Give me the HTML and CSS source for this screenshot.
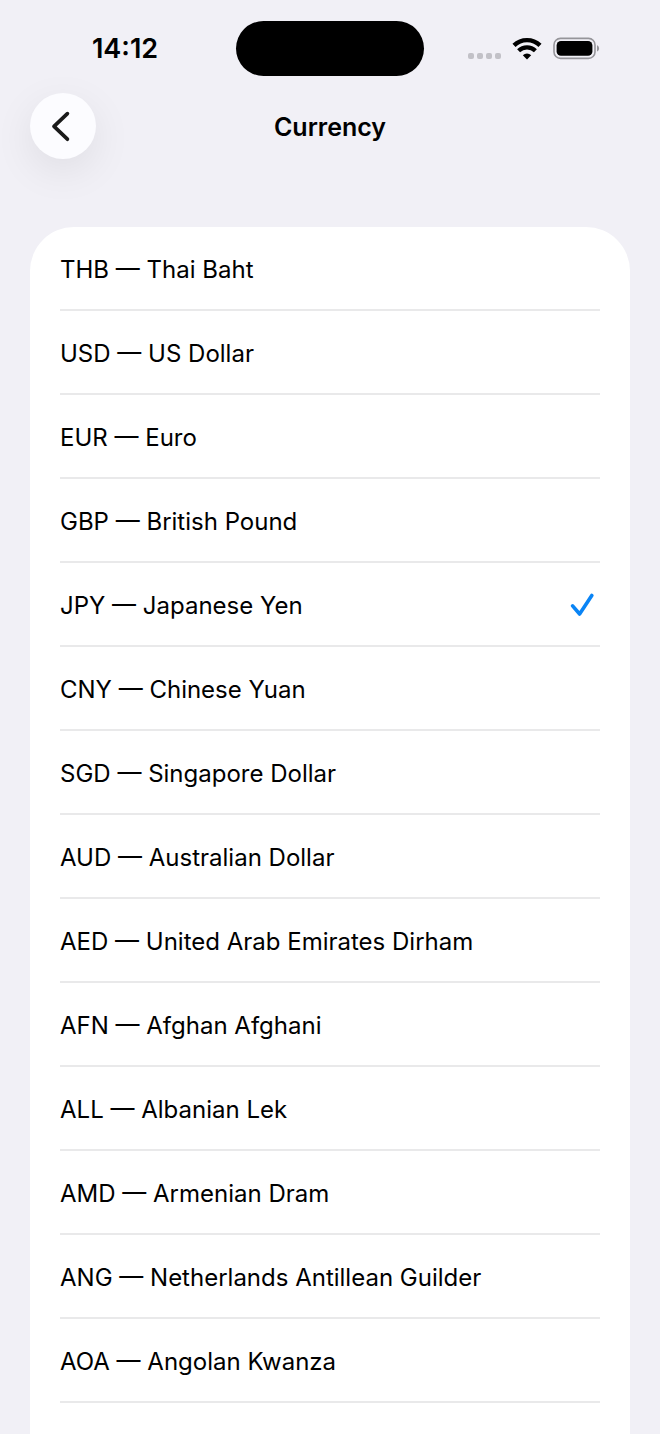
FILE: index.html
```
<!DOCTYPE html>
<html lang="en">
<head>
    <meta charset="UTF-8">
    <meta name="viewport" content="width=device-width, initial-scale=1.0">
    <title>Currency</title>
    <link rel="stylesheet" href="styles.css">
</head>
<body>
    <div class="status-bar">
        <time class="clock">14:12</time>
        <div class="island"></div>
        <div class="status-icons">
            <svg class="signal" width="34" height="28" viewBox="0 0 34 28" fill="#c2c1c7" aria-hidden="true">
                <rect x="1" y="18" width="6" height="6" rx="2"/>
                <rect x="10" y="18" width="6" height="6" rx="2"/>
                <rect x="19" y="18" width="6" height="6" rx="2"/>
                <rect x="28" y="18" width="6" height="6" rx="2"/>
            </svg>
            <svg width="30" height="28" viewBox="0 0 30 28" aria-hidden="true">
                <path d="M2 10.4A18.6 18.6 0 0 1 28 10.4" fill="none" stroke="#000" stroke-width="4.4"/>
                <path d="M6.6 15.8A12 12 0 0 1 23.4 15.8" fill="none" stroke="#000" stroke-width="4.2"/>
                <path d="M15 24.4L10.8 20.2A6 6 0 0 1 19.2 20.2Z"/>
            </svg>
            <svg width="47" height="28" viewBox="0 0 47 28" aria-hidden="true">
                <rect x="1" y="3.4" width="41" height="20" rx="6.5" fill="none" stroke="#96959a" stroke-width="1.6"/>
                <rect x="3.6" y="6" width="35.8" height="14.8" rx="4.4"/>
                <path d="M44 10.2C46.8 11.4 46.8 15.4 44 16.6Z" fill="#96959a"/>
            </svg>
        </div>
    </div>

    <header>
        <button class="back" type="button" aria-label="Back">
            <svg width="34" height="34" viewBox="0 0 34 34" aria-hidden="true">
                <path d="M21.4 4.6L8 17.4L21.4 30.2" fill="none" stroke="#1a1a1a" stroke-width="3.7" stroke-linecap="round" stroke-linejoin="round"/>
            </svg>
        </button>
        <h1>Currency</h1>
    </header>

    <main>
        <ul class="currency-list">
            <li><button type="button">THB — Thai Baht</button></li>
            <li><button type="button">USD — US Dollar</button></li>
            <li><button type="button">EUR — Euro</button></li>
            <li><button type="button">GBP — British Pound</button></li>
            <li>
                <button type="button" aria-pressed="true">JPY — Japanese Yen
                    <svg class="check" width="24" height="24" viewBox="0 0 24 24" aria-hidden="true">
                        <path d="M2.6 12.8L9.6 21L21.8 2.4" fill="none" stroke="#0a84f5" stroke-width="3.6" stroke-linecap="round" stroke-linejoin="round"/>
                    </svg>
                </button>
            </li>
            <li><button type="button">CNY — Chinese Yuan</button></li>
            <li><button type="button">SGD — Singapore Dollar</button></li>
            <li><button type="button">AUD — Australian Dollar</button></li>
            <li><button type="button">AED — United Arab Emirates Dirham</button></li>
            <li><button type="button">AFN — Afghan Afghani</button></li>
            <li><button type="button">ALL — Albanian Lek</button></li>
            <li><button type="button">AMD — Armenian Dram</button></li>
            <li><button type="button">ANG — Netherlands Antillean Guilder</button></li>
            <li><button type="button">AOA — Angolan Kwanza</button></li>
        </ul>
    </main>
</body>
</html>
```
FILE: styles.css
```
* {
    box-sizing: border-box;
}
body {
    margin: 0;
    min-height: 100vh;
    display: flex;
    flex-direction: column;
    background-color: #f1f0f6;
    color: #000;
    font-family: Inter, "Liberation Sans", sans-serif;
}

/* status bar */
.status-bar {
    display: grid;
    grid-template-columns: 1fr 188px 1fr;
    align-items: center;
    padding-top: 21px;
}
.clock {
    padding-left: 14px;
    text-align: center;
    font-size: 27px;
    font-weight: 600;
}
.island {
    height: 55px;
    border-radius: 28px;
    background-color: #000;
}
.status-icons {
    display: flex;
    justify-content: flex-end;
    gap: 11px;
    padding-right: 60px;
}

/* title bar */
header {
    display: grid;
    grid-template-columns: 66px 1fr 66px;
    align-items: center;
    padding: 17px 30px 0;
}
.back {
    display: flex;
    align-items: center;
    justify-content: center;
    width: 66px;
    height: 66px;
    padding: 0;
    border: none;
    border-radius: 50%;
    background-color: #fcfcff;
    box-shadow: 0 12px 40px rgba(0, 0, 0, 0.08);
    cursor: pointer;
}
h1 {
    margin: 0;
    padding-top: 2px;
    text-align: center;
    font-size: 25px;
    font-weight: 600;
}

/* currency list */
main {
    flex: 1;
    margin: 68px 30px 0;
    padding: 0 30px;
    border-radius: 44px 44px 0 0;
    background-color: #fff;
}
.currency-list {
    margin: 0;
    padding: 0;
    list-style: none;
}
.currency-list li {
    border-bottom: 2px solid #e9e9ea;
}
.currency-list button {
    display: flex;
    align-items: center;
    justify-content: space-between;
    width: 100%;
    height: 82px;
    padding: 2px 6px 0 0;
    border: none;
    background: none;
    color: inherit;
    font-family: inherit;
    font-size: 24px;
    text-align: left;
    cursor: pointer;
}
```
